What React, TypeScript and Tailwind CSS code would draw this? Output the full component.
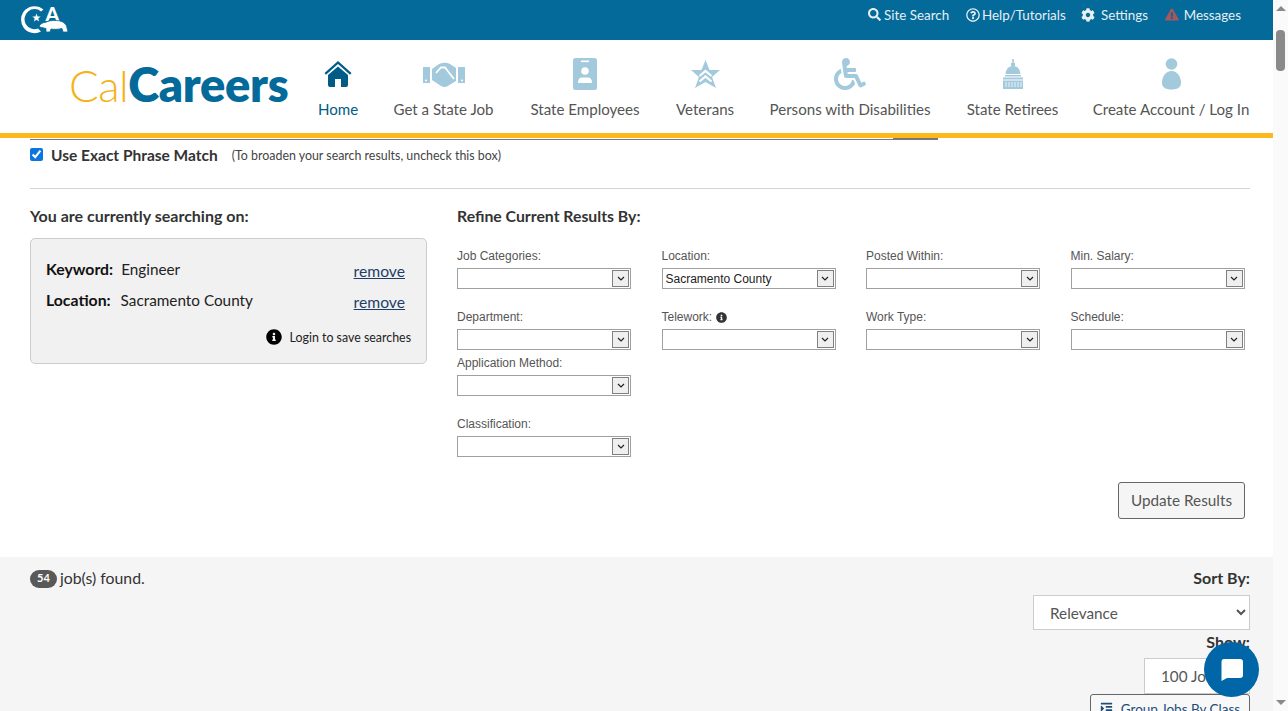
import { FaSearch, FaRegQuestionCircle, FaCog, FaExclamationTriangle, FaInfoCircle, FaWheelchair, FaIndent } from "react-icons/fa";

const sans = "font-['Lato','Noto_Sans',sans-serif]";

function CaLogo() {
  return (
    <svg width="50" height="40" viewBox="21 0 50 40" className="block">
      <path d="M43.5 9.5 A13.5 13.5 0 1 0 41 31.5 L38 28.5 A10 10 0 1 1 41 11.5 Z" fill="#fff" />
      <polygon points="36.5,13.5 37.6,16.4 40.7,16.5 38.3,18.4 39.1,21.4 36.5,19.7 33.9,21.4 34.7,18.4 32.3,16.5 35.4,16.4" fill="#fff" />
      <text x="45.5" y="21" fontSize="19.5" fontWeight="900" fill="#fff" fontFamily="Lato, sans-serif">A</text>
      <path d="M39 26 C41 23.5 43 22.5 45 22.5 C50 20 56 20 60 21 C64 22 67 25 67 28 L68 32 L63 32 L62 28.5 C58 29.5 54 29.5 51 29 L50 32 L46 32 L46 28.5 C44 28 42 27.5 41 27.5 Z" fill="#fff" stroke="#036a9a" strokeWidth="0.8" />
    </svg>
  );
}

function HomeIcon() {
  return (
    <svg width="30" height="30" viewBox="0 0 30 30">
      <path d="M1.5 14 L15 2 L28.5 14 L27 15.8 L15 5 L3 15.8 Z" fill="#005c86" />
      <path d="M5 16 L15 7.5 L25 16 V26 Q25 28 23 28 H18 V20 H12 V28 H7 Q5 28 5 26 Z" fill="#005c86" />
    </svg>
  );
}

function HandshakeIcon() {
  return (
    <svg width="42" height="26" viewBox="0 0 42 26">
      <path d="M0 6 H7 V22 H0 Z M35 6 H42 V22 H35 Z" fill="#a3c9dc" />
      <path d="M9 8 L16 3 Q22 0.5 27 3 L33 7 V20 L24 25.5 Q21 26.5 18 25 L9 19 Z" fill="#a3c9dc" />
      <path d="M13 12 L18 6.5 L22 6.5 L31 18" fill="none" stroke="#fff" strokeWidth="1.8" />
      <circle cx="3" cy="19.5" r="1" fill="#fff" />
      <circle cx="39" cy="19.5" r="1" fill="#fff" />
    </svg>
  );
}

function BadgeIcon() {
  return (
    <svg width="24" height="32" viewBox="0 0 24 32">
      <rect width="24" height="32" rx="2.5" fill="#a3c9dc" />
      <rect x="8" y="2.5" width="8" height="1.6" fill="#fff" />
      <circle cx="12" cy="13" r="3.8" fill="#fff" />
      <path d="M5 25 Q5 19.5 9 19.5 H15 Q19 19.5 19 25 Z" fill="#fff" />
    </svg>
  );
}

function StarIcon() {
  return (
    <svg width="29" height="28" viewBox="0 0 29 28">
      <polygon points="14.5,0 18.5,10 29,10 21,17 25,28 14.5,22 4,28 8,17 0,10 10.5,10" fill="#a3c9dc" />
      <path d="M8.5 16 L14.5 11 L20.5 16 M8.5 21.5 L14.5 16.5 L20.5 21.5" fill="none" stroke="#fff" strokeWidth="2.2" />
    </svg>
  );
}

function CapitolIcon() {
  return (
    <svg width="22" height="30" viewBox="0 0 22 30" fill="#a3c9dc">
      <rect x="10.2" y="0" width="1.6" height="5" />
      <rect x="9" y="4" width="4" height="3" />
      <path d="M3.5 15 Q4.5 7 11 7 Q17.5 7 18.5 15 Z" />
      <rect x="3" y="16" width="16" height="1.5" />
      <rect x="1" y="18.5" width="20" height="2" />
      <path d="M1 21.5 H21 V30 H1 Z" />
      <path d="M4 23 V28 M7 23 V28 M10 23 V28 M13 23 V28 M16 23 V28 M19 23 V28" stroke="#fff" strokeWidth="0.8" />
    </svg>
  );
}

function PersonIcon() {
  return (
    <svg width="19" height="32" viewBox="0 0 19 32" fill="#a3c9dc">
      <circle cx="9.5" cy="6" r="5.8" />
      <path d="M9.5 13 C15 13 19 18 19 25 C19 29.5 15 31.5 9.5 31.5 C4 31.5 0 29.5 0 25 C0 18 4 13 9.5 13 Z" />
    </svg>
  );
}

const navItems = [
  { label: "Home", width: "w-[40px]", icon: <HomeIcon />, color: "text-[#005c86]" },
  { label: "Get a State Job", width: "w-[101px]", icon: <HandshakeIcon />, color: "text-[#555]" },
  { label: "State Employees", width: "w-[112px]", icon: <BadgeIcon />, color: "text-[#555]" },
  { label: "Veterans", width: "w-[58px]", icon: <StarIcon />, color: "text-[#555]" },
  { label: "Persons with Disabilities", width: "w-[162px]", icon: <FaWheelchair size={32} color="#a3c9dc" />, color: "text-[#555]" },
  { label: "State Retirees", width: "w-[93px]", icon: <CapitolIcon />, color: "text-[#555]" },
  { label: "Create Account / Log In", width: "w-[154px]", icon: <PersonIcon />, color: "text-[#555]" },
];

function TopLink({ icon, label, className }: { icon: React.ReactNode; label: string; className: string }) {
  return (
    <div className={`flex items-center text-[13.4px] text-[#e6eff4] ${className}`}>
      {icon}
      <span className="whitespace-nowrap">{label}</span>
    </div>
  );
}

function FakeSelect({ label, value, info, className }: { label: string; value?: string; info?: boolean; className: string }) {
  return (
    <div className={`w-[174px] font-['Liberation_Sans',Arial,sans-serif] text-[12px] ${className}`}>
      <div className="flex h-[14px] items-center gap-[4px] leading-[14px] text-[#555]">
        {label}
        {info && <FaInfoCircle size={11} color="#333" />}
      </div>
      <div className="mt-[5px] flex h-[21px] items-center justify-between border border-[#a0a0a0] bg-white pl-[3px] pr-[1px] text-[#222]">
        <span className="whitespace-nowrap">{value}</span>
        <span className="flex h-[17px] w-[17px] items-center justify-center border border-[#808080] bg-[#efefef]">
          <svg width="8" height="5" viewBox="0 0 8 5"><path d="M1 1 L4 4 L7 1" fill="none" stroke="#222" strokeWidth="1.2" /></svg>
        </span>
      </div>
    </div>
  );
}

export default function App() {
  return (
    <div className={`flex h-[711px] w-[1288px] overflow-hidden bg-white ${sans}`}>
      <div className="relative w-[1273px] shrink-0 overflow-hidden">
        {/* top bar */}
        <div className="flex h-10 items-start justify-between bg-[#036a9a] pl-[21px] pr-[32px]">
          <CaLogo />
          <div className="flex h-[30px] items-center">
            <TopLink className="w-[98px]" icon={<FaSearch size={13} className="mr-[3px]" />} label="Site Search" />
            <TopLink className="w-[115px]" icon={<FaRegQuestionCircle size={14} className="mr-[2px]" />} label="Help/Tutorials" />
            <TopLink className="w-[84px]" icon={<FaCog size={14} className="mr-[6px]" />} label="Settings" />
            <TopLink className="w-[76px]" icon={<FaExclamationTriangle size={17} color="#a8565c" className="mr-[5px]" />} label="Messages" />
          </div>
        </div>

        {/* nav */}
        <div className="flex h-[98px] border-b-[5px] border-[#fdb81e]">
          <div className="w-[318px] shrink-0 pl-[69px] pt-[16px] leading-[56px] whitespace-nowrap">
            <span className="text-[44px] font-light tracking-[-0.5px] text-[#f5b21a]">Cal</span>
            <span className="text-[47px] font-extrabold tracking-[-0.3px] text-[#036a9a]">Careers</span>
          </div>
          <div className="flex gap-[35px]">
            {navItems.map((item) => (
              <div key={item.label} className={`flex ${item.width} flex-col items-center`}>
                <div className="mt-[17px] flex h-[34px] items-center justify-center">{item.icon}</div>
                <div className={`mt-[8px] whitespace-nowrap text-[15.1px] leading-5 ${item.color}`}>{item.label}</div>
              </div>
            ))}
          </div>
        </div>

        {/* search input remnant */}
        <div className="ml-[30px] flex h-[2px] w-[908px]">
          <div className="mt-px h-px w-[863px] bg-[#777]" />
          <div className="h-[2px] w-[45px] bg-[#777]" />
        </div>

        <div className="pl-[30px] pr-[23px]">
          <div className="mt-[7px] flex h-[18px] items-center">
            <input type="checkbox" defaultChecked className="m-0 -mt-[4px] h-[13px] w-[13px] accent-[#0b75e0]" />
            <span className="ml-[8px] whitespace-nowrap text-[15.5px] font-bold text-[#333]">Use Exact Phrase Match</span>
            <span className="ml-[14px] whitespace-nowrap text-[12.4px] text-[#444]">(To broaden your search results, uncheck this box)</span>
          </div>
          <div className="mt-[23px] h-px bg-[#d4d4d4]" />

          <div className="mt-[18px] flex">
            {/* current search */}
            <div className="w-[397px] shrink-0">
              <div className="h-[18px] text-[16px] font-bold leading-[18px] text-[#333]">You are currently searching on:</div>
              <div className="mt-[13px] h-[126px] rounded-[5px] border border-[#ccc] bg-[#f1f1f1] px-[15px] pt-[20px] text-[15.3px] text-[#222]">
                <div className="flex h-[20px] items-center justify-between">
                  <div><b className="text-[15.8px] text-[#111]">Keyword:</b><span className="ml-[8px]">Engineer</span></div>
                  <a className="mr-[6px] mt-[6px] text-[15.7px] text-[#1d3f66] underline">remove</a>
                </div>
                <div className="mt-[11px] flex h-[20px] items-center justify-between">
                  <div><b className="text-[15.8px] text-[#111]">Location:</b><span className="ml-[10px]">Sacramento County</span></div>
                  <a className="mr-[6px] mt-[6px] text-[15.7px] text-[#1d3f66] underline">remove</a>
                </div>
                <div className="mt-[18px] flex items-center justify-end text-[12.4px] leading-[20px]">
                  <FaInfoCircle size={16} color="#000" className="mr-[8px] -mt-[3px]" />
                  Login to save searches
                </div>
              </div>
            </div>

            {/* refine */}
            <div className="ml-[30px] flex-1">
              <div className="h-[18px] text-[15.8px] font-bold leading-[18px] text-[#333]">Refine Current Results By:</div>
              <div className="mt-[23px] grid grid-cols-[204.5px_204.5px_204.5px_174px] items-start">
                <FakeSelect className="h-[61px] pt-[1px]" label="Job Categories:" />
                <FakeSelect className="h-[61px] pt-[1px]" label="Location:" value="Sacramento County" />
                <FakeSelect className="h-[61px] pt-[1px]" label="Posted Within:" />
                <FakeSelect className="h-[61px] pt-[1px]" label="Min. Salary:" />
                <FakeSelect className="h-[46px] pt-[1px]" label="Department:" />
                <FakeSelect className="h-[46px] pt-[1px]" label="Telework:" info />
                <FakeSelect className="h-[46px] pt-[1px]" label="Work Type:" />
                <FakeSelect className="h-[46px] pt-[1px]" label="Schedule:" />
                <FakeSelect className="h-[61px] pt-[1px]" label="Application Method:" />
                <div className="col-span-3 h-[61px]" />
                <FakeSelect className="h-[46px] pt-[1px]" label="Classification:" />
              </div>
              <div className="mt-[20px] flex justify-end pr-[5px]">
                <button className="h-[37px] w-[127px] rounded-[3px] border border-[#666] bg-[#f5f5f5] text-[15.3px] text-[#555]">Update Results</button>
              </div>
            </div>
          </div>
        </div>

        {/* results */}
        <div className="mt-[38px] flex h-[200px] justify-between bg-[#f5f5f5] pl-[30px] pr-[23px] pt-[12px]">
          <div className="flex h-[18px] items-center text-[15.8px] text-[#333]">
            <span className="mr-[3px] mt-[1px] flex h-[18px] w-[27px] items-center justify-center rounded-full bg-[#595959] text-[11px] font-bold text-white">54</span>
            job(s) found.
          </div>
          <div className="flex w-[217px] flex-col items-end">
            <div className="h-[18px] text-[16px] font-bold leading-[18px] text-[#333]">Sort By:</div>
            <select defaultValue="Relevance" className="mt-[8px] h-[35px] w-[217px] border border-[#ccc] bg-white pl-[12px] text-[15.3px] text-[#555]">
              <option>Relevance</option>
            </select>
            <div className="mt-[3px] h-[18px] text-[16px] font-bold leading-[18px] text-[#333]">Show:</div>
            <select defaultValue="100 Jobs" className="mt-[7px] h-[36px] w-[106px] border border-[#ccc] bg-white pl-[12px] text-[15.3px] text-[#555]">
              <option>100 Jobs</option>
            </select>
            <button className="flex h-[30px] w-[160px] items-start justify-center gap-[8px] rounded-[3px] border border-[#666] bg-[#f8f8f8] pt-[4px] text-[13.5px] text-[#1d4e7a]">
              <FaIndent size={13} className="mt-[3px]" />
              Group Jobs By Class
            </button>
          </div>
        </div>

        {/* chat bubble */}
        <div className="absolute left-[1204px] top-[642px] flex h-[55px] w-[55px] items-center justify-center rounded-full bg-[#0066a8]">
          <svg width="24" height="24" viewBox="0 0 24 24">
            <path d="M4 1 H20 Q23 1 23 4 V17 Q23 20 20 20 H7 L1.5 23 V4 Q1.5 1 4 1 Z" fill="#fff" />
          </svg>
        </div>
      </div>

      {/* scrollbar */}
      <div className="flex w-[15px] shrink-0 flex-col items-center bg-[#fafafa]">
        <div className="mt-[6px] h-0 w-0 border-x-[5px] border-b-[5px] border-x-transparent border-b-[#8a8a8a]" />
        <div className="mt-[19px] h-[41px] w-[9px] rounded-[4px] bg-[#8a8a8a]" />
        <div className="mb-[6px] mt-auto h-0 w-0 border-x-[5px] border-t-[5px] border-x-transparent border-t-[#8a8a8a]" />
      </div>
    </div>
  );
}
